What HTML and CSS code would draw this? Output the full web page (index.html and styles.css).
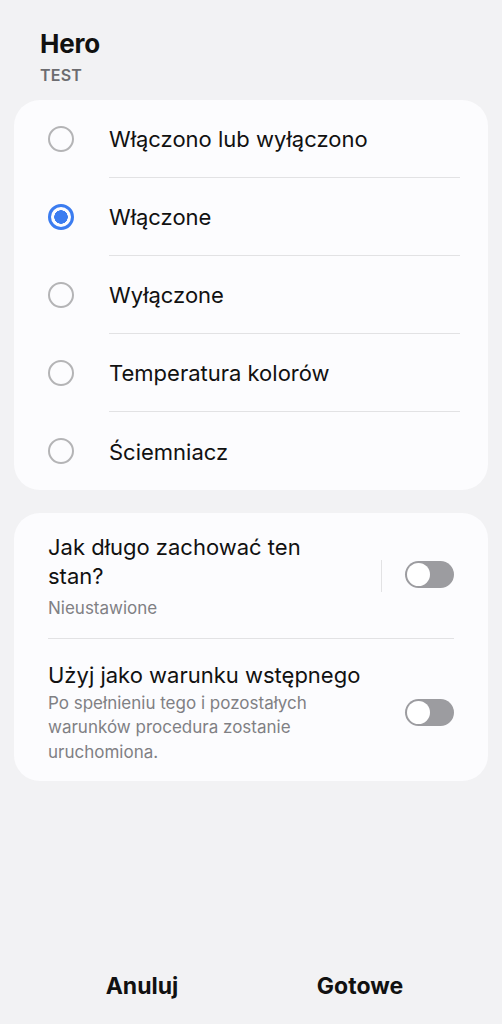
FILE: index.html
```html
<!DOCTYPE html>
<html lang="pl">
<head>
    <meta charset="UTF-8">
    <meta name="viewport" content="width=device-width, initial-scale=1.0">
    <title>Hero</title>
    <link rel="stylesheet" href="styles.css">
</head>
<body>
    <div class="page">
        <div class="header">
            <h1>Hero</h1>
            <div class="sub">TEST</div>
        </div>

        <div class="card">
            <div class="option">
                <span class="radio"></span>
                <span class="label">Włączono lub wyłączono</span>
            </div>
            <div class="option">
                <span class="radio checked"></span>
                <span class="label">Włączone</span>
            </div>
            <div class="option">
                <span class="radio"></span>
                <span class="label">Wyłączone</span>
            </div>
            <div class="option">
                <span class="radio"></span>
                <span class="label">Temperatura kolorów</span>
            </div>
            <div class="option">
                <span class="radio"></span>
                <span class="label last">Ściemniacz</span>
            </div>
        </div>

        <div class="card settings">
            <div class="setting first">
                <div class="text">
                    <div class="title">Jak długo zachować ten stan?</div>
                    <div class="desc">Nieustawione</div>
                </div>
                <span class="vline"></span>
                <span class="switch"><span class="knob"></span></span>
            </div>
            <div class="setting">
                <div class="text wide">
                    <div class="title">Użyj jako warunku wstępnego</div>
                    <div class="desc">Po spełnieniu tego i pozostałych warunków procedura zostanie uruchomiona.</div>
                </div>
                <span class="switch"><span class="knob"></span></span>
            </div>
        </div>

        <div class="spacer"></div>

        <div class="buttons">
            <button class="btn">Anuluj</button>
            <button class="btn">Gotowe</button>
        </div>
    </div>
</body>
</html>
```

FILE: styles.css
```css
body{
    margin: 0;
    background-color: #f2f2f4;
    font-family: Inter, "Noto Sans", sans-serif;
    color: #111;
}
.page{
    height: 1024px;
    display: flex;
    flex-direction: column;
    padding: 0 14px;
    box-sizing: border-box;
}
.header{
    padding: 28px 26px 13px;
}
h1{
    margin: 0;
    font-size: 26px;
    font-weight: 700;
    line-height: 32px;
    letter-spacing: -0.2px;
}
.sub{
    margin-top: 3px;
    font-size: 16px;
    font-weight: 600;
    color: #6c6c70;
    line-height: 24px;
    letter-spacing: 0.2px;
}
.card{
    background-color: #fcfcfe;
    border-radius: 26px;
}
.option{
    height: 78px;
    display: flex;
    align-items: center;
}
.radio{
    width: 26px;
    height: 26px;
    margin: 0 35px 0 34px;
    border: 2px solid #b4b4b6;
    border-radius: 50%;
    box-sizing: border-box;
    flex-shrink: 0;
}
.radio.checked{
    border: 3px solid #3b7cf0;
    background: radial-gradient(circle, #3b7cf0 0 6.5px, transparent 7px);
}
.label{
    flex: 1;
    align-self: stretch;
    display: flex;
    align-items: center;
    margin-right: 28px;
    border-bottom: 1px solid #e2e2e4;
    font-size: 22px;
    padding-top: 1px;
}
.label.last{
    border-bottom: none;
}
.settings{
    margin-top: 23px;
    padding: 0 34px;
}
.setting{
    display: flex;
    align-items: center;
    padding: 20px 0 17px;
}
.setting.first{
    border-bottom: 1px solid #e2e2e4;
}
.text{
    width: 300px;
}
.text.wide{
    width: 335px;
    margin-right: -22px;
}
.title{
    font-size: 22px;
    line-height: 29px;
}
.desc{
    font-size: 17px;
    line-height: 24.5px;
    color: #808084;
    margin-top: 5px;
}
.setting:not(.first){
    padding-top: 22px;
}
.setting:not(.first) .desc{
    margin-top: 1px;
}
.vline{
    width: 1px;
    height: 32px;
    background-color: #e2e2e4;
    margin: 0 0 2px 33px;
}
.switch{
    margin-left: auto;
    width: 49px;
    height: 27px;
    border-radius: 14px;
    background-color: #9c9ca0;
    position: relative;
    flex-shrink: 0;
}
.setting.first .switch{
    margin-bottom: 4px;
}
.knob{
    position: absolute;
    left: 2px;
    top: 2px;
    width: 23px;
    height: 23px;
    border-radius: 50%;
    background-color: #fff;
}
.spacer{
    flex: 1;
}
.buttons{
    display: flex;
    padding: 0 19px;
}
.btn{
    flex: 1;
    border: none;
    background: none;
    font-family: Inter, "Noto Sans", sans-serif;
    font-size: 23px;
    font-weight: 700;
    color: #111;
    height: 76px;
}
```
